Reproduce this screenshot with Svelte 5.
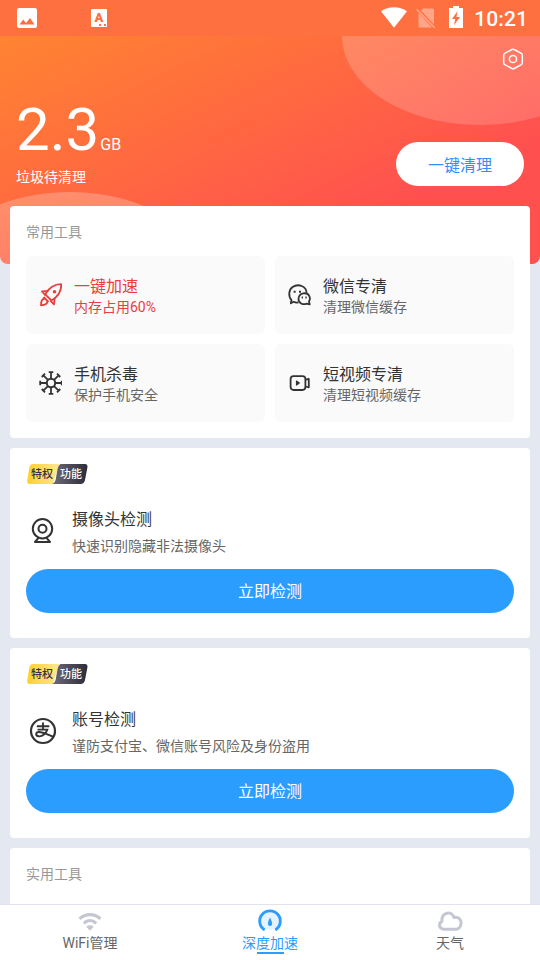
<script>
  const tools = [
    { icon: 'rocket', title: '一键加速', desc: '内存占用60%', hot: true },
    { icon: 'wechat', title: '微信专清', desc: '清理微信缓存' },
    { icon: 'virus', title: '手机杀毒', desc: '保护手机安全' },
    { icon: 'video', title: '短视频专清', desc: '清理短视频缓存' }
  ];

  const checks = [
    { icon: 'camera', title: '摄像头检测', desc: '快速识别隐藏非法摄像头' },
    { icon: 'alipay', title: '账号检测', desc: '谨防支付宝、微信账号风险及身份盗用' }
  ];

  const tabs = [
    { icon: 'wifi', label: 'WiFi管理' },
    { icon: 'speed', label: '深度加速' },
    { icon: 'weather', label: '天气' }
  ];

  let active = $state(1);
</script>

<div class="app">
  <header class="status">
    <svg class="st-img" width="20" height="20" viewBox="0 0 20 20">
      <path fill="#fff" fill-rule="evenodd" d="M2 0h16a2 2 0 0 1 2 2v16a2 2 0 0 1-2 2H2a2 2 0 0 1-2-2V2a2 2 0 0 1 2-2zM2.500 16.500h15L13 10l-4 5-2.800-3.500z" />
    </svg>
    <span class="st-app">A<i></i></span>
    <div class="st-right">
      <svg width="26" height="21" viewBox="0 0 26 21"><path fill="#fff" d="M0 4.200C7.500-1.200 18.500-1.200 26 4.200L13 20.700z" /></svg>
      <svg width="20" height="22" viewBox="0 0 20 22">
        <path fill="#fff" opacity=".38" d="M7 1.500h9.500a1.500 1.500 0 0 1 1.500 1.500v14.500L5 3.600zM2.500 6 16 20.500H4a1.500 1.500 0 0 1-1.500-1.500z" />
        <path stroke="#fff" opacity=".38" stroke-width="1.700" d="M.8 2.500l18 18.500" />
      </svg>
      <svg width="14" height="22" viewBox="0 0 14 22">
        <path fill="#fff" fill-rule="evenodd" d="M4 0h6v2h4v20H0V2h4zM8.500 5 3 13h3.200L5 19.200l6-8.200H7.500z" />
      </svg>
      <span class="clock">10:21</span>
    </div>
  </header>

  <section class="hero">
    <svg class="hero-bg" width="540" height="228" viewBox="0 0 540 228">
      <defs>
        <linearGradient id="g1" x1="0" y1="0" x2="1" y2="0.3">
          <stop offset="0" stop-color="#fff" stop-opacity=".2" />
          <stop offset="1" stop-color="#fff" stop-opacity=".15" />
        </linearGradient>
        <linearGradient id="g2" x1="0.5" y1="0" x2="0.3" y2="1">
          <stop offset="0" stop-color="#fff" stop-opacity=".24" />
          <stop offset="1" stop-color="#fff" stop-opacity=".12" />
        </linearGradient>
      </defs>
      <ellipse cx="480" cy="0" rx="138" ry="89" fill="url(#g1)" />
      <ellipse cx="70" cy="245" rx="138" ry="89" fill="url(#g2)" />
    </svg>
    <div class="hero-top">
      <svg width="22" height="22" viewBox="0 0 22 22" fill="none" stroke="#fff" stroke-width="1.500">
        <path stroke-linejoin="round" d="M9.800 1.500Q11 .8 12.200 1.500L19.300 5.400Q20.300 6 20.300 7.200V14.800Q20.300 16 19.300 16.600L12.200 20.500Q11 21.200 9.800 20.500L2.700 16.600Q1.700 16 1.700 14.800V7.200Q1.700 6 2.700 5.400Z" />
        <circle cx="11" cy="11" r="3.600" />
      </svg>
    </div>
    <div class="hero-row">
      <div class="junk">
        <div class="amount"><b>2.3</b><span>GB</span></div>
        <p>垃圾待清理</p>
      </div>
      <button class="clean">一键清理</button>
    </div>
  </section>

  <main class="content">
    <section class="card tools">
      <h2>常用工具</h2>
      <div class="grid">
        {#each tools as t}
          <div class="tile" class:hot={t.hot}>
            <svg width="24" height="24" viewBox="0 0 24 24" fill="none" stroke="currentColor" stroke-width="1.800" stroke-linejoin="round">
              {#if t.icon === 'rocket'}
                <path d="M23.200 1.200C17 1.200 11.500 3.800 7.200 11.300L13.500 17.500C20.500 13.500 23.500 8 23.200 1.200Z" />
                <path d="M10.300 7.800 4 8.400 7.500 12.500M16.800 14.500 16 21.500 12.500 17.800" />
                <path d="M7 15.500C4 15.500 3 18.500 3 22.300 6.500 22 9.500 21.500 9.300 18.500M5.500 14 10.500 19" />
                <circle cx="16.500" cy="8.700" r=".9" fill="currentColor" />
              {:else if t.icon === 'wechat'}
                <path d="M11.500 19.400C9.500 19.800 8 19.500 6.800 18.800L3.800 20.300 4.500 17C1 13 1.700 6.800 5.600 4 11.500.2 19.300 3.300 19.600 9.800" />
                <path d="M22 18.300 22.700 21.400 19.700 20.600C16 22.300 11.400 20 11.500 15.800 12 9.700 20 8.600 22.200 12.800 23.200 14.800 23.200 16.500 22 18.300Z" />
                <path stroke-width="2" d="M6.600 8.800h2M12 8.800h2M14.700 14.600h1.300M18.400 14.600h1.300" />
              {:else if t.icon === 'virus'}
                <circle cx="13" cy="12" r="4.200" stroke-width="2" />
                {#each [0, 45, 90, 135, 180, 225, 270, 315] as a}
                  <path transform="rotate({a} 13 12)" d="M13 7.700V1.500M10.700 1.200h4.600" />
                {/each}
              {:else}
                <rect x="3.600" y="5.200" width="14.800" height="13.800" rx="2.900" />
                <path d="M18.600 8.700 21.800 7.900V16.300L18.600 15.500" />
                <path fill="currentColor" stroke-width="1.200" d="M9.500 10 12.300 12 9.500 14z" />
              {/if}
            </svg>
            <div class="tile-text">
              <h3>{t.title}</h3>
              <p>{t.desc}</p>
            </div>
          </div>
        {/each}
      </div>
    </section>

    {#each checks as c}
      <section class="card check">
        <div class="badge">
          <svg width="62" height="20" viewBox="0 0 62 20">
            <defs>
              <linearGradient id="gold"><stop offset="0" stop-color="#ffd02f" /><stop offset="1" stop-color="#ffe694" /></linearGradient>
              <linearGradient id="dark"><stop offset="0" stop-color="#6c6b76" /><stop offset="1" stop-color="#2e2c3a" /></linearGradient>
            </defs>
            <path fill="url(#gold)" d="M7 0H33L27 20H4Q.6 20 1.200 16.500L3.300 3.500Q4 0 7 0Z" />
            <path fill="url(#dark)" d="M34.500 0H59Q62 0 61.400 3.500L59 16Q58.200 20 54.500 20H26Q29 19 29.800 15L31.500 5Q32.300 1 34.500 0Z" />
          </svg>
          <span class="b1">特权</span><span class="b2">功能</span>
        </div>
        <div class="check-row">
          <svg width="32" height="32" viewBox="0 0 32 32" fill="none" stroke="currentColor" stroke-width="2">
            {#if c.icon === 'camera'}
              <circle cx="16.500" cy="13.700" r="9.700" />
              <circle cx="16.500" cy="13.700" r="4" />
              <path stroke-linejoin="round" d="M12.500 22.800 9 27H24L20.500 22.800" />
            {:else}
              <circle cx="17" cy="16" r="12" stroke-width="2.200" />
              <path stroke-width="1.900" d="M10.800 11.200H23.300M17 7.500V14.500M11.500 14.600H21.300C20 18.500 16.500 21.700 12.800 21.300 9 20.800 9.500 17.200 13 17 17 16.800 21 19.500 27.500 22" />
            {/if}
          </svg>
          <div>
            <h3>{c.title}</h3>
            <p>{c.desc}</p>
          </div>
        </div>
        <button class="go">立即检测</button>
      </section>
    {/each}

    <section class="card more">
      <h2>实用工具</h2>
    </section>
  </main>

  <nav class="tabbar">
    {#each tabs as tab, i}
      <button class="tab" class:active={active === i} onclick={() => (active = i)}>
        <svg width="26" height="24" viewBox="0 0 26 24" fill="none" stroke="currentColor">
          {#if tab.icon === 'wifi'}
            <path stroke-width="3.200" d="M2.600 9.800C8.500 4.200 17.500 4.200 23.400 9.800M6.800 14.400C10.500 10.800 15.500 10.800 19.200 14.400" />
            <path fill="currentColor" stroke="none" d="M9.300 17.700Q13 14.800 16.700 17.700L13 21.800z" />
          {:else if tab.icon === 'speed'}
            <circle cx="13" cy="12" r="9" fill="#e6f3ff" stroke="none" />
            <path stroke-width="2.900" d="M7.700 21A10.300 10.300 0 1 1 18.300 21" />
            <path fill="currentColor" stroke="none" d="M13 8.500C15.500 13 16 17 13 17S10.500 13 13 8.500Z" />
          {:else}
            <path stroke-width="3" stroke-linejoin="round" d="M6.500 20.200C1.500 19.600 1.500 14 4.900 12.300 4.300 2.800 15 1.500 17 8.500 21.500 7.500 24.300 10.500 24.100 14 24 18 21.500 20.200 18.500 20.200Z" />
          {/if}
        </svg>
        <span>{tab.label}</span>
      </button>
    {/each}
  </nav>
</div>

<style>
  :global(body) {
    background: #e4e8f1;
  }

  .app {
    width: 540px;
    height: 960px;
    overflow: hidden;
    display: flex;
    flex-direction: column;
    background: #e4e8f1;
    font-family: Roboto, "Noto Sans CJK SC", sans-serif;
    color: #333;
  }

  h2, h3, p { margin: 0; font-weight: 400; }

  button {
    border: 0;
    padding: 0;
    font: inherit;
    cursor: pointer;
  }

  svg { display: block; flex: none; }

  /* Status bar */
  .status {
    height: 36px;
    flex: none;
    display: flex;
    align-items: center;
    padding: 0 12px 0 17px;
    background: #ff7040;
    color: #fff;
  }

  .st-app {
    width: 16px;
    height: 18px;
    margin-left: 54px;
    background: #fff;
    border-radius: 1px;
    color: #ff7040;
    font-size: 13px;
    font-weight: 900;
    line-height: 17px;
    text-align: center;
    position: relative;
  }

  .st-app i {
    position: absolute;
    right: 1px;
    bottom: 1px;
    width: 7px;
    border-bottom: 2px dotted #ff7040;
  }

  .st-right {
    margin-left: auto;
    display: flex;
    align-items: center;
  }

  .st-right svg:nth-child(1) { margin: -1px 9px 0 0; }
  .st-right svg:nth-child(2) { margin-right: 13px; }
  .st-right svg:nth-child(3) { margin: -2px 11px 0 0; }

  .clock {
    font-size: 21px;
    font-weight: 500;
    letter-spacing: 0.1px;
    line-height: 36px;
    padding-top: 1px;
  }

  /* Hero */
  .hero {
    height: 228px;
    flex: none;
    position: relative;
    overflow: hidden;
    border-radius: 0 0 8px 8px;
    background: linear-gradient(155deg, #ff8432 0%, #ff6e3d 32%, #ff5050 75%);
    color: #fff;
  }

  .hero-bg {
    position: absolute;
    inset: 0;
  }

  .hero-top {
    display: flex;
    justify-content: flex-end;
    padding: 12px 16px 0 0;
    position: relative;
  }

  .hero-row {
    display: flex;
    justify-content: space-between;
    align-items: flex-end;
    padding: 27px 16px 0;
    position: relative;
  }

  .junk { height: 89px; }

  .amount {
    display: flex;
    align-items: baseline;
    height: 66px;
    line-height: 66px;
  }

  .amount b {
    font-size: 60px;
    font-weight: 400;
  }

  .amount span {
    font-size: 16px;
    margin-left: 1px;
  }

  .junk p {
    font-size: 14px;
    line-height: 20px;
    margin-top: 4px;
  }

  .clean {
    width: 128px;
    height: 44px;
    border-radius: 22px;
    background: #fff;
    color: #348cff;
    font-size: 16px;
  }

  /* Cards */
  .content {
    flex: 1;
    min-height: 0;
    overflow: hidden;
    margin-top: -58px;
    padding: 0 10px;
    display: flex;
    flex-direction: column;
    gap: 10px;
    position: relative;
  }

  .card {
    flex: none;
    background: #fff;
    border-radius: 4px;
    padding: 16px;
  }

  .card h2 {
    font-size: 14px;
    line-height: 20px;
    color: #999;
  }

  .grid {
    display: grid;
    grid-template-columns: 1fr 1fr;
    gap: 10px;
    margin-top: 14px;
  }

  .tile {
    height: 78px;
    display: flex;
    align-items: center;
    gap: 12px;
    padding-left: 12px;
    border-radius: 6px;
    background: #fafafa;
  }

  .tile-text { padding-top: 3px; }

  .tile h3 {
    font-size: 16px;
    line-height: 22px;
  }

  .tile p {
    font-size: 14px;
    line-height: 20px;
    margin-top: -1px;
    color: #666;
  }

  .tile.hot, .tile.hot p { color: #e83e3e; }

  .check { height: 158px; }

  .badge {
    width: 62px;
    height: 20px;
    position: relative;
    font-size: 11px;
    font-weight: 500;
    line-height: 22px;
  }

  .badge span {
    position: absolute;
    top: 0;
  }

  .b1 { left: 5px; color: #33304a; }
  .b2 { left: 34px; color: #fff; }

  .check-row {
    display: flex;
    align-items: center;
    gap: 14px;
    height: 52px;
    margin-top: 22px;
  }

  .check-row svg { margin-top: -2px; }

  .check-row h3 {
    font-size: 16px;
    line-height: 24px;
  }

  .check-row p {
    font-size: 14px;
    line-height: 20px;
    margin-top: 4px;
    color: #666;
  }

  .go {
    display: block;
    width: 100%;
    height: 44px;
    margin-top: 11px;
    padding-bottom: 2px;
    border-radius: 22px;
    background: #2a9dff;
    color: #fff;
    font-size: 16px;
  }

  .more { height: 60px; }

  /* Tab bar */
  .tabbar {
    height: 55px;
    flex: none;
    display: flex;
    background: #fff;
    border-top: 1px solid #e0e2ee;
    position: relative;
  }

  .tab {
    flex: 1;
    display: flex;
    flex-direction: column;
    align-items: center;
    padding-top: 4px;
    background: none;
    color: #c4c7d2;
  }

  .tab span {
    font-size: 14px;
    line-height: 20px;
    color: #666;
  }

  .tab.active, .tab.active span { color: #2a9dff; }

  .tab.active::after {
    content: '';
    width: 27px;
    height: 2px;
    margin-top: -1px;
    background: #2a9dff;
  }
</style>
